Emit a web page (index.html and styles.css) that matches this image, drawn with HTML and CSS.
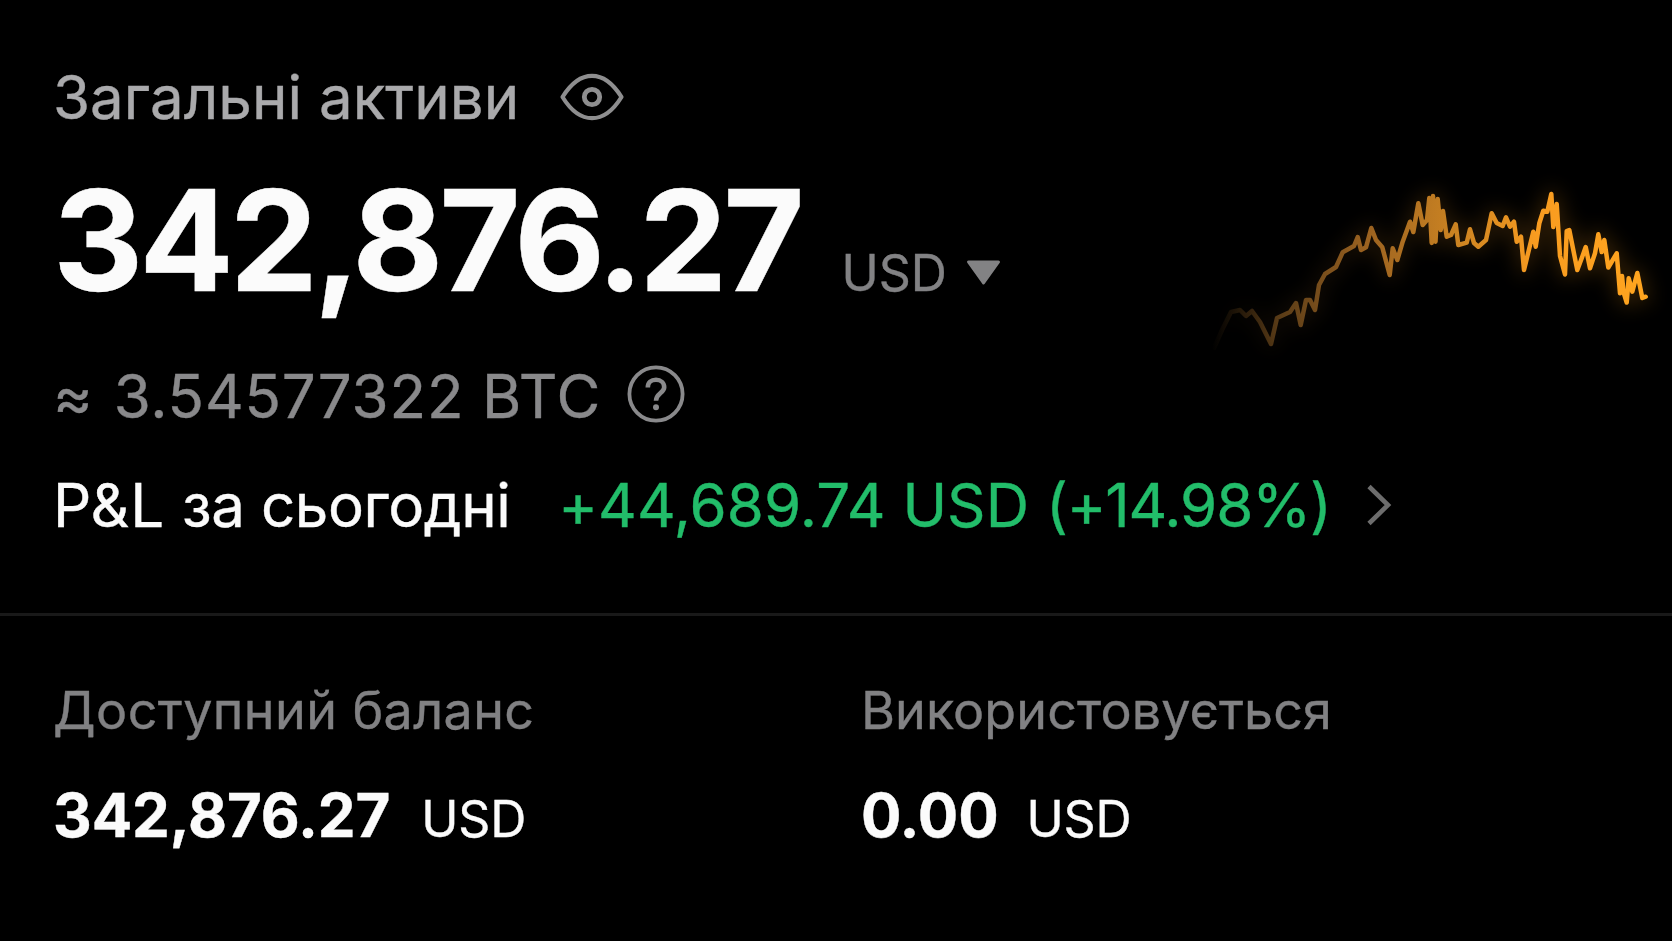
FILE: index.html
```html
<!DOCTYPE html>
<html lang="uk">
<head>
<meta charset="utf-8">
<title>Загальні активи</title>
<link rel="stylesheet" href="styles.css">
</head>
<body>
<main class="wallet">
  <section class="summary">
    <div class="overview">
      <div class="totals">
        <div class="row title-row">
          <h1 class="title">Загальні активи</h1>
          <svg class="eye" width="64" height="50" viewBox="0 0 64 50" fill="none" stroke="#8e8e8f" stroke-width="4.2" stroke-linejoin="round">
            <path d="M2.500 25C9 14.500 18.500 3.800 32 3.800S55 14.500 61.500 25C55 35.500 45.500 46.200 32 46.200S9 35.500 2.500 25Z"/>
            <circle cx="32" cy="25" r="7.700" stroke-width="4.800"/>
          </svg>
        </div>
        <div class="row amount-row">
          <span class="amount">342,876.27</span>
          <span class="currency">USD</span>
          <svg class="caret" width="35" height="26" viewBox="0 0 35 26"><path d="M2.500 2H32.500L17.500 23Z" fill="#828284" stroke="#828284" stroke-width="3" stroke-linejoin="round"/></svg>
        </div>
        <div class="row btc-row">
          <span class="approx">≈</span>
          <span class="btc">3.54577322 BTC</span>
          <svg class="help" width="58" height="58" viewBox="0 0 58 58" fill="none" stroke="#89898b">
            <circle cx="29" cy="29" r="26.600" stroke-width="3.800"/>
            <path d="M20.800 22.500C20.800 17.500 24.200 14.800 29 14.800S37.200 17.800 37.200 22.200C37.200 28 29 28.200 29 35.800" stroke-width="4.600"/>
            <circle cx="29" cy="42.300" r="3" fill="#89898b" stroke="none"/>
          </svg>
        </div>
      </div>
      <svg class="chart" width="460" height="200" viewBox="1200 170 460 200" fill="none" stroke-linejoin="round" stroke-linecap="round">
        <defs>
          <linearGradient id="fade" gradientUnits="userSpaceOnUse" x1="1212" y1="0" x2="1646" y2="0">
            <stop offset="0" stop-color="#c58332" stop-opacity="0"/>
            <stop offset=".06" stop-color="#c58332" stop-opacity=".16"/>
            <stop offset=".15" stop-color="#c58332" stop-opacity=".42"/>
            <stop offset=".35" stop-color="#cf832b" stop-opacity=".72"/>
            <stop offset=".55" stop-color="#dc8e25" stop-opacity=".9"/>
            <stop offset=".75" stop-color="#f99c20"/>
            <stop offset="1" stop-color="#ffa51f"/>
          </linearGradient>
          <filter id="glow" filterUnits="userSpaceOnUse" x="1200" y="150" width="472" height="240"><feGaussianBlur stdDeviation="10"/></filter>
          <path id="line" d="M1214 348L1222 330L1231 312L1240 310L1246 316L1252 311L1260 322L1271 344L1277 318L1290 312L1296 303L1300.700 325L1306 300L1310 300L1315 310L1319 285L1325 274L1336 267L1342.700 252.300L1354 246L1357.700 237L1361 250L1366 247.300L1371.300 228L1376 240L1382.300 247.300L1389.700 275L1392.700 248.300L1397.300 260L1402.700 241.700L1410 221.700L1413.300 232L1418.300 203.300L1422.700 225L1427 220L1429.300 198L1431.700 243L1433 196L1435.500 241.700L1437.700 199L1440.700 230L1443 211L1446.700 236.700L1451 235L1455.700 224.300L1458.300 245L1466.700 242.700L1470 229.300L1474 243L1478.300 246.700L1486 240L1491.700 213.300L1496.700 223L1502.700 226L1506 217.300L1510 226.700L1514 221.700L1516.700 241.700L1521 236.700L1524 270L1533.300 231.700L1535.700 246.700L1539.300 223.300L1543.300 210.700L1547.300 211.700L1551.300 194L1553.300 227L1556.700 204L1560 256L1565 274.500L1566.700 231L1569.300 230L1577.300 270L1581.700 258.300L1585.700 247L1590 268.300L1595 253.300L1598.300 234.300L1601.700 252L1604.300 240L1608.300 267.500L1616.700 253.300L1620 293.300L1622 276L1623.500 292L1626.700 302.500L1628.700 278.300L1632.300 291.700L1637.300 273L1642.300 298L1645.700 296.700"/>
        </defs>
        <use href="#line" stroke="url(#fade)" stroke-width="12" opacity=".18" filter="url(#glow)"/>
        <use href="#line" stroke="url(#fade)" stroke-width="4.500"/>
      </svg>
    </div>
    <div class="row pnl-row">
      <span class="pnl-label"><span class="pnl-short">P&amp;L</span> за сьогодні</span>
      <span class="pnl-value">+44,689.74 USD <span class="pnl-percent">(+14.98%)</span></span>
      <svg class="chevron" width="28" height="44" viewBox="0 0 28 44" fill="none" stroke="#6d6d6d" stroke-width="4.600"><path d="M4 3.500L23 22L4 40.500"/></svg>
    </div>
  </section>
  <section class="balances">
    <div class="balance">
      <h2 class="label available">Доступний баланс</h2>
      <p class="value"><strong class="number">342,876.27</strong><span class="unit">USD</span></p>
    </div>
    <div class="balance">
      <h2 class="label used">Використовується</h2>
      <p class="value"><strong class="number">0.00</strong><span class="unit used-unit">USD</span></p>
    </div>
  </section>
</main>
</body>
</html>
```
FILE: styles.css
```css
* { box-sizing: border-box; margin: 0; }

body {
  background: #000;
  color: #fbfbfb;
  font-family: Inter, "Liberation Sans", sans-serif;
  font-size: 60px;
  font-weight: 440;
  line-height: 72px;
  white-space: nowrap;
  overflow: hidden;
  -webkit-text-stroke: 0.4px currentColor;
}

svg { display: block; flex: none; overflow: visible; }

.wallet { height: 941px; }

.summary {
  height: 616px;
  padding: 61px 12px 0 53px;
  border-bottom: 3px solid #191919;
}

.overview { display: flex; justify-content: space-between; }
.row { display: flex; align-items: center; height: 72px; }

.title { font-size: 60px; font-weight: 440; color: #aaaaac; letter-spacing: 0.05px; }
.eye { margin-left: 41px; }

.amount-row { height: 140px; margin-top: 37px; align-items: baseline; line-height: 140px; }
.amount { font-size: 140px; font-weight: 700; letter-spacing: -4.2px; }
.currency { margin-left: 41px; font-size: 50px; color: #828284; }
.caret { margin-left: 19px; align-self: flex-start; margin-top: 90px; }

.btc-row { margin-top: 50px; color: #89898b; }
.btc { margin-left: 21px; letter-spacing: 0.85px; }
.help { margin-left: 26px; margin-top: -4px; }

.chart { margin-top: 109px; }

.pnl-row { margin-top: 37px; }
.pnl-label { letter-spacing: -0.4px; }
.pnl-short { letter-spacing: 1.2px; }
.pnl-value { margin-left: 48px; color: #22bd6a; letter-spacing: 0.05px; }
.pnl-percent { letter-spacing: -1.1px; }
.chevron { margin-left: 34px; }

.balances {
  display: grid;
  grid-template-columns: 808px 1fr;
  padding: 64px 0 0 53px;
}

.label { height: 62px; font-size: 52px; font-weight: 440; line-height: 62px; color: #818183; }
.available { letter-spacing: 0.42px; }
.used { letter-spacing: 0.1px; }
.value { display: flex; align-items: baseline; height: 72px; margin-top: 37px; }
.number { font-weight: 700; letter-spacing: -0.1px; }
.unit { margin-left: 31px; font-size: 50px; letter-spacing: -0.2px; }
.used-unit { margin-left: 28px; }
```
